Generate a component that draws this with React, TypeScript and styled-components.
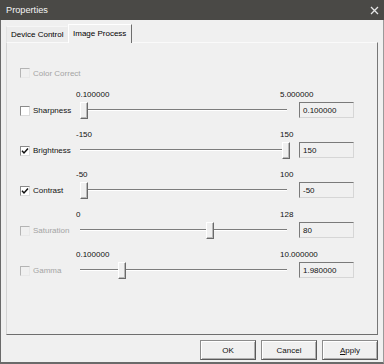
import React from "react";
import styled, { createGlobalStyle } from "styled-components";

const GlobalStyle = createGlobalStyle`
  html, body {
    margin: 0;
    padding: 0;
    background: #ffffff;
  }
  body {
    font-family: "Liberation Sans", Arial, sans-serif;
  }
`;

const Window = styled.div`
  width: 384px;
  height: 364px;
  box-sizing: border-box;
  display: flex;
  flex-direction: column;
  background: #f0f0f0;
  border-left: 1px solid #6a6a6a;
  border-right: 1px solid #9a9a9a;
  border-bottom: 2px solid #6a6a6a;
`;

const TitleBar = styled.div`
  height: 20px;
  flex: none;
  display: flex;
  align-items: center;
  justify-content: space-between;
  padding: 0 5px 0 6px;
  margin-left: -1px;
  margin-right: -1px;
  background: #4a4946;
  color: #f4f4f4;
  font-size: 9.2px;
`;

const Body = styled.div`
  flex: 1;
  display: flex;
  flex-direction: column;
  padding: 2px 5px 2px 5px;
`;

const TabStrip = styled.div`
  height: 20px;
  flex: none;
  display: flex;
  align-items: flex-end;
  position: relative;
  z-index: 1;
`;

const Tab = styled.div<{ $active?: boolean; $width: number }>`
  box-sizing: border-box;
  width: ${(p) => p.$width}px;
  height: ${(p) => (p.$active ? 19 : 16)}px;
  margin-bottom: ${(p) => (p.$active ? -1 : 0)}px;
  padding-left: 4px;
  display: flex;
  align-items: center;
  font-size: 8px;
  color: #000;
  background: ${(p) => (p.$active ? "#f0f0f0" : "#ececec")};
  border-top: 1px solid ${(p) => (p.$active ? "#ffffff" : "#f6f6f6")};
  border-left: 1px solid ${(p) => (p.$active ? "#ffffff" : "#e2e2e2")};
  border-right: 1px solid ${(p) => (p.$active ? "#6e6e6e" : "transparent")};
  padding-bottom: ${(p) => (p.$active ? 2 : 0)}px;
`;

const Panel = styled.div`
  height: 293px;
  box-sizing: border-box;
  flex: none;
  border-top: 1px solid #fafafa;
  border-left: 1px solid #d4d4d4;
  border-right: 1px solid #777777;
  border-bottom: 1px solid #6e6e6e;
  padding: 24px 0 0 13px;
  display: flex;
  flex-direction: column;
  gap: 9px;
`;

const CheckLabel = styled.label<{ $disabled?: boolean }>`
  display: flex;
  align-items: center;
  gap: 3px;
  height: 12px;
  font-size: 8px;
  color: ${(p) => (p.$disabled ? "#a4a4a4" : "#111")};
  white-space: nowrap;
`;

const Box = styled.span<{ $disabled?: boolean }>`
  width: 10px;
  height: 10px;
  box-sizing: border-box;
  flex: none;
  display: flex;
  align-items: center;
  justify-content: center;
  background: ${(p) => (p.$disabled ? "#f0f0f0" : "#ffffff")};
  border-top: 1px solid ${(p) => (p.$disabled ? "#b4b4b4" : "#8a8a8a")};
  border-left: 1px solid ${(p) => (p.$disabled ? "#b4b4b4" : "#8a8a8a")};
  border-right: 1px solid ${(p) => (p.$disabled ? "#e8e8e8" : "#dcdcdc")};
  border-bottom: 1px solid ${(p) => (p.$disabled ? "#e8e8e8" : "#dcdcdc")};
`;

const SliderRow = styled.div`
  display: grid;
  grid-template-columns: 56px 223px 55px;
  grid-template-rows: 12px 17px;
  row-gap: 2px;
`;

const CheckCell = styled.div`
  grid-row: 2;
  grid-column: 1;
  display: flex;
  align-items: center;
`;

const Limits = styled.div`
  grid-row: 1;
  grid-column: 2;
  display: flex;
  align-items: center;
  font-size: 8px;
  color: #111;
`;

const MinLabel = styled.span`
  width: 204px;
  flex: none;
`;

const TrackCell = styled.div`
  grid-row: 2;
  grid-column: 2;
  padding-left: 4px;
`;

const TrackArea = styled.div`
  position: relative;
  width: 209px;
  height: 17px;
`;

const TrackLine = styled.div`
  position: absolute;
  left: 0;
  top: 7px;
  width: 207px;
  height: 1px;
  background: #7c7c7c;
  border-bottom: 1px solid #ffffff;
`;

const Thumb = styled.div`
  position: absolute;
  top: 0;
  width: 8px;
  height: 17px;
  box-sizing: border-box;
  background: #f0f0f0;
  border-top: 1px solid #ffffff;
  border-left: 1px solid #ffffff;
  border-right: 1px solid #6a6a6a;
  border-bottom: 1px solid #6a6a6a;
  box-shadow: inset -1px -1px 0 #b8b8b8;
`;

const Edit = styled.div`
  grid-row: 2;
  grid-column: 3;
  height: 16px;
  box-sizing: border-box;
  padding-left: 3px;
  display: flex;
  align-items: center;
  font-size: 8px;
  color: #111;
  background: #f0f0f0;
  border-top: 1px solid #7a7a7a;
  border-left: 1px solid #7a7a7a;
  border-right: 1px solid #d6d6d6;
  border-bottom: 1px solid #d6d6d6;
`;

const ButtonBar = styled.div`
  display: flex;
  justify-content: flex-end;
  gap: 5px;
  padding-top: 5px;
`;

const Button = styled.div`
  width: 56px;
  height: 20px;
  box-sizing: border-box;
  display: flex;
  align-items: center;
  justify-content: center;
  font-size: 8px;
  color: #111;
  background: #f0f0f0;
  border: 1px solid #8c8c8c;
  border-right-color: #5a5a5a;
  border-bottom-color: #5a5a5a;
  box-shadow: inset 1px 1px 0 #ffffff, inset -1px -1px 0 #b0b0b0;
`;

const Accel = styled.span`
  text-decoration: underline;
`;

type SliderSpec = {
  name: string;
  min: string;
  max: string;
  value: string;
  frac: number;
  checked: boolean;
  enabled: boolean;
};

const sliders: SliderSpec[] = [
  { name: "Sharpness", min: "0.100000", max: "5.000000", value: "0.100000", frac: 0, checked: false, enabled: true },
  { name: "Brightness", min: "-150", max: "150", value: "150", frac: 1, checked: true, enabled: true },
  { name: "Contrast", min: "-50", max: "100", value: "-50", frac: 0, checked: true, enabled: true },
  { name: "Saturation", min: "0", max: "128", value: "80", frac: 80 / 128, checked: false, enabled: false },
  { name: "Gamma", min: "0.100000", max: "10.000000", value: "1.980000", frac: (1.98 - 0.1) / 9.9, checked: false, enabled: false },
];

const CheckBox = ({ checked, disabled }: { checked?: boolean; disabled?: boolean }) => (
  <Box $disabled={disabled}>
    {checked && (
      <svg width="8" height="8" viewBox="0 0 8 8">
        <polyline points="1,3.8 3,6 7,1.5" fill="none" stroke="#111" strokeWidth="1.5" />
      </svg>
    )}
  </Box>
);

export default function App() {
  return (
    <>
      <GlobalStyle />
      <Window>
        <TitleBar>
          <span>Properties</span>
          <svg width="9" height="9" viewBox="0 0 9 9">
            <path d="M1 1L8 8M8 1L1 8" stroke="#e6e6e6" strokeWidth="1.3" />
          </svg>
        </TitleBar>
        <Body>
          <TabStrip>
            <Tab $width={62}>Device Control</Tab>
            <Tab $width={64} $active>
              Image Process
            </Tab>
          </TabStrip>
          <Panel>
            <CheckLabel $disabled>
              <CheckBox disabled />
              Color Correct
            </CheckLabel>
            {sliders.map((s) => (
              <SliderRow key={s.name}>
                <CheckCell>
                  <CheckLabel $disabled={!s.enabled}>
                    <CheckBox checked={s.checked} disabled={!s.enabled} />
                    {s.name}
                  </CheckLabel>
                </CheckCell>
                <Limits>
                  <MinLabel>{s.min}</MinLabel>
                  <span>{s.max}</span>
                </Limits>
                <TrackCell>
                  <TrackArea>
                    <TrackLine />
                    <Thumb style={{ left: Math.round(s.frac * 202) }} />
                  </TrackArea>
                </TrackCell>
                <Edit>{s.value}</Edit>
              </SliderRow>
            ))}
          </Panel>
          <ButtonBar>
            <Button>OK</Button>
            <Button>Cancel</Button>
            <Button>
              <Accel>A</Accel>pply
            </Button>
          </ButtonBar>
        </Body>
      </Window>
    </>
  );
}
